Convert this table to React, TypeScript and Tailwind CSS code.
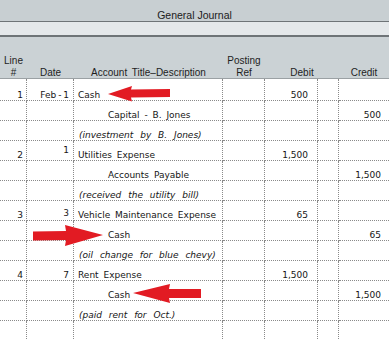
import React from 'react'

type Kind = 'main' | 'sub' | 'note'

interface JournalRow {
  line?: string
  date?: string
  dateLift?: string
  account?: string
  kind?: Kind
  debit?: string
  credit?: string
}

const rows: JournalRow[] = [
  { line: '1', date: 'Feb - 1', account: 'Cash', kind: 'main', debit: '500' },
  { account: 'Capital - B. Jones', kind: 'sub', credit: '500' },
  { account: '(investment by B. Jones)', kind: 'note' },
  { line: '2', date: '1', dateLift: 'pb-[5px]', account: 'Utilities Expense', kind: 'main', debit: '1,500' },
  { account: 'Accounts Payable', kind: 'sub', credit: '1,500' },
  { account: '(received the utility bill)', kind: 'note' },
  { line: '3', date: '3', dateLift: 'pb-[2px] text-[8.5px]', account: 'Vehicle Maintenance Expense', kind: 'main', debit: '65' },
  { account: 'Cash', kind: 'sub', credit: '65' },
  { account: '(oil change for blue chevy)', kind: 'note' },
  { line: '4', date: '7', account: 'Rent Expense', kind: 'main', debit: '1,500' },
  { account: 'Cash', kind: 'sub', credit: '1,500' },
  { account: '(paid rent for Oct.)', kind: 'note' },
  {},
]

const accountStyle: Record<Kind, string> = {
  main: 'pl-[4px] [word-spacing:2px]',
  sub: 'pl-[34px] [word-spacing:2px]',
  note: 'pl-[5px] italic [word-spacing:4px]',
}

const cell = 'flex items-end leading-[10px] border-dotted border-[#8a8a8a] border-b'

// red clip-art arrows laid over the table
function Arrows() {
  return (
    <svg className="absolute left-0 top-0 pointer-events-none" width="389" height="340" viewBox="0 0 389 340">
      <polygon fill="#e21b23" points="108,94 132,86 131,89.5 170,89 170,97 131,97.5 132,101.5" />
      <polygon fill="#e21b23" points="33,231.5 66,231 65,225 103,235 65,246 66,240 33,240.5" />
      <polygon fill="#e21b23" points="133,293 170,284 169,289 201,289 201,298 169,298 170,303" />
    </svg>
  )
}

export default function App() {
  return (
    <div className="relative w-[389px] h-[340px] overflow-hidden bg-white text-[#151515]">
      {/* Title */}
      <div className="h-[21px] flex items-end justify-center bg-[#c8cfd2] font-['Liberation_Sans',sans-serif] text-[10.5px] leading-[12px] text-[#202020]">
        General Journal
      </div>
      <div className="h-[1px] bg-[#6e7477]" />
      <div className="h-[13px] bg-[#e4e8ea]" />
      <div className="h-[2px] bg-[#6e7477]" />

      {/* Column headings */}
      <div className="h-[42px] grid grid-cols-[27px_47px_149px_42px_53px_21px_50px] bg-[#cbd2d5] border-b border-[#9ba1a4] font-['Liberation_Sans',sans-serif] text-[10px] text-[#1e1e1e]">
        <div className="flex flex-col items-center justify-end">
          <div className="leading-[14px]">Line</div>
          <div className="leading-[10px]">#</div>
        </div>
        <div className="flex flex-col items-center justify-end">
          <div className="leading-[10px]">Date</div>
        </div>
        <div className="flex flex-col items-center justify-end">
          <div className="leading-[10px] [word-spacing:2px]">Account Title–Description</div>
        </div>
        <div className="flex flex-col items-center justify-end">
          <div className="leading-[14px]">Posting</div>
          <div className="leading-[10px]">Ref</div>
        </div>
        <div className="col-span-2 flex flex-col items-center justify-end">
          <div className="leading-[10px]">Debit</div>
        </div>
        <div className="flex flex-col items-center justify-end">
          <div className="leading-[10px]">Credit</div>
        </div>
      </div>

      {/* Entries */}
      <div className="font-['DejaVu_Sans',sans-serif] text-[9px]">
        {rows.map((r, i) => (
          <div
            key={i}
            className={`grid grid-cols-[27px_47px_149px_42px_53px_21px_50px] ${i === 0 ? 'h-[22px]' : 'h-[20px]'}`}
          >
            <div className={`${cell} border-r justify-end pr-[3px]`}>{r.line}</div>
            <div className={`${cell} border-r justify-end pr-[4px] [word-spacing:-1px] ${r.dateLift ?? ''}`}>{r.date}</div>
            <div className={`${cell} border-r whitespace-nowrap ${r.kind ? accountStyle[r.kind] : ''}`}>{r.account}</div>
            <div className={`${cell} border-r`} />
            <div className={`${cell} border-r justify-end pr-[9px]`}>{r.debit}</div>
            <div className={`${cell} border-r`} />
            <div className={`${cell} justify-end pr-[8px]`}>{r.credit}</div>
          </div>
        ))}
      </div>

      <Arrows />
    </div>
  )
}
